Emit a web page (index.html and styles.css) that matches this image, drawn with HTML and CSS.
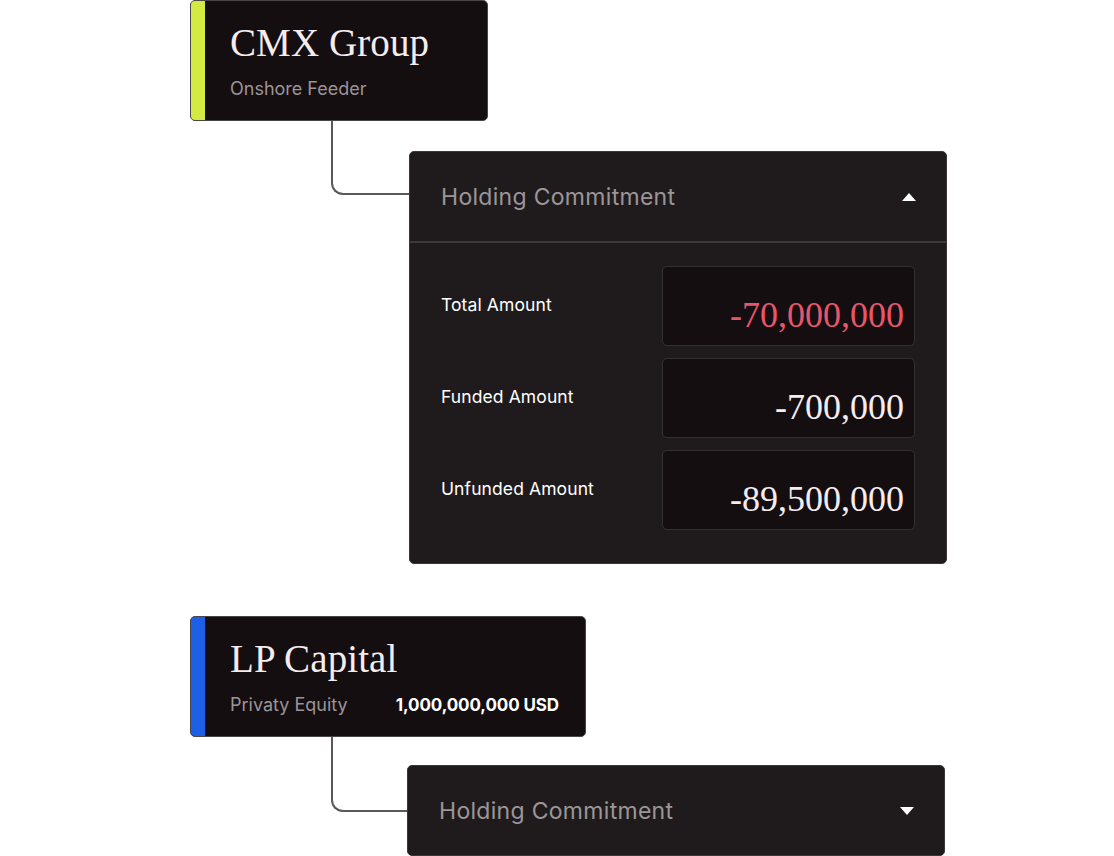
FILE: index.html
```html
<!DOCTYPE html>
<html>
<head>
<meta charset="utf-8">
<link rel="stylesheet" href="styles.css">
</head>
<body>
<div class="tree">
  <div class="card card-lime">
    <div class="card-stripe"></div>
    <div class="card-body">
      <div class="card-title">CMX Group</div>
      <div class="card-meta"><span class="card-sub">Onshore Feeder</span></div>
    </div>
  </div>
  <div class="branch branch-open">
    <div class="elbow"></div>
    <div class="panel">
      <div class="panel-head">
        <span class="panel-title">Holding Commitment</span>
        <svg class="caret" width="14" height="8" viewBox="0 0 14 8"><path d="M0 8 L7 0 L14 8 Z" fill="#ffffff"/></svg>
      </div>
      <div class="panel-body">
        <div class="row">
          <div class="row-label">Total Amount</div>
          <div class="field"><span class="value value-neg">-70,000,000</span></div>
        </div>
        <div class="row">
          <div class="row-label">Funded Amount</div>
          <div class="field"><span class="value">-700,000</span></div>
        </div>
        <div class="row">
          <div class="row-label">Unfunded Amount</div>
          <div class="field"><span class="value">-89,500,000</span></div>
        </div>
      </div>
    </div>
  </div>

  <div class="card card-blue">
    <div class="card-stripe"></div>
    <div class="card-body">
      <div class="card-title">LP Capital</div>
      <div class="card-meta"><span class="card-sub">Privaty Equity</span><span class="card-amount">1,000,000,000 USD</span></div>
    </div>
  </div>
  <div class="branch branch-closed">
    <div class="elbow"></div>
    <div class="panel">
      <div class="panel-head">
        <span class="panel-title">Holding Commitment</span>
        <svg class="caret" width="14" height="8" viewBox="0 0 14 8"><path d="M0 0 L14 0 L7 8 Z" fill="#ffffff"/></svg>
      </div>
    </div>
  </div>
</div>
</body>
</html>
```

FILE: styles.css
```css
html, body {
  margin: 0;
  padding: 0;
  background: #ffffff;
}
body {
  font-family: Inter, "Noto Sans", sans-serif;
  width: 1114px;
  height: 856px;
  overflow: hidden;
}
.tree {
  padding-left: 190px;
  display: flex;
  flex-direction: column;
  align-items: flex-start;
}
.card {
  display: flex;
  height: 121px;
  box-sizing: border-box;
  border: 1px solid #4a4547;
  border-radius: 5px;
  background: #140e10;
  overflow: hidden;
}
.card-lime { width: 298px; }
.card-blue { width: 396px; margin-top: 52px; }
.card-stripe {
  width: 14px;
  flex: none;
}
.card-lime .card-stripe { background: #d3ea42; }
.card-blue .card-stripe { background: #1d5fe6; }
.card-body {
  flex: 1;
  padding: 19px 0 0 25px;
}
.card-title {
  font-family: "Liberation Serif", serif;
  font-size: 39px;
  line-height: 46px;
  color: #f4ecee;
  letter-spacing: 0.1px;
}
.card-meta {
  display: flex;
  align-items: baseline;
  margin-top: 12px;
  padding-right: 26px;
  justify-content: space-between;
}
.card-sub {
  font-size: 18px;
  color: #9b9597;
  letter-spacing: 0;
}
.card-amount {
  font-size: 17px;
  font-weight: 700;
  color: #ffffff;
  letter-spacing: -0.1px;
}
.branch {
  display: flex;
  align-items: flex-start;
  padding-left: 141px;
}
.elbow {
  flex: none;
  box-sizing: border-box;
  border-left: 2px solid #5c5759;
  border-bottom: 2px solid #5c5759;
  border-bottom-left-radius: 12px;
}
.branch-open .elbow { width: 78px; height: 74px; }
.branch-open .panel { margin-top: 30px; }
.branch-closed .elbow { width: 76px; height: 75px; }
.branch-closed .panel { margin-top: 28px; }
.panel {
  width: 538px;
  box-sizing: border-box;
  background: #1f1b1d;
  border: 1px solid #3b3638;
  border-radius: 5px;
}
.panel-head {
  height: 89px;
  display: flex;
  align-items: center;
  justify-content: space-between;
  padding: 0 30px 0 31px;
}
.branch-open .panel-head {
  border-bottom: 2px solid #3e3a3c;
}
.panel-title {
  font-size: 23px;
  color: #9c9698;
  letter-spacing: 0.3px;
}
.caret { display: block; }
.panel-body {
  display: flex;
  flex-direction: column;
  gap: 12px;
  padding: 23px 31px 33px 31px;
}
.row {
  display: flex;
  align-items: center;
  justify-content: space-between;
}
.row-label {
  font-size: 17.5px;
  color: #ffffff;
  margin-top: -4px;
  letter-spacing: 0.1px;
}
.field {
  width: 253px;
  height: 80px;
  box-sizing: border-box;
  background: #140e10;
  border: 1px solid #342f31;
  border-radius: 5px;
  display: flex;
  align-items: flex-end;
  justify-content: flex-end;
  padding: 0 10px 10px 0;
}
.value {
  font-family: "Liberation Serif", serif;
  font-size: 36px;
  line-height: 40px;
  color: #f4ecee;
}
.value-neg { color: #e8566c; }
```
